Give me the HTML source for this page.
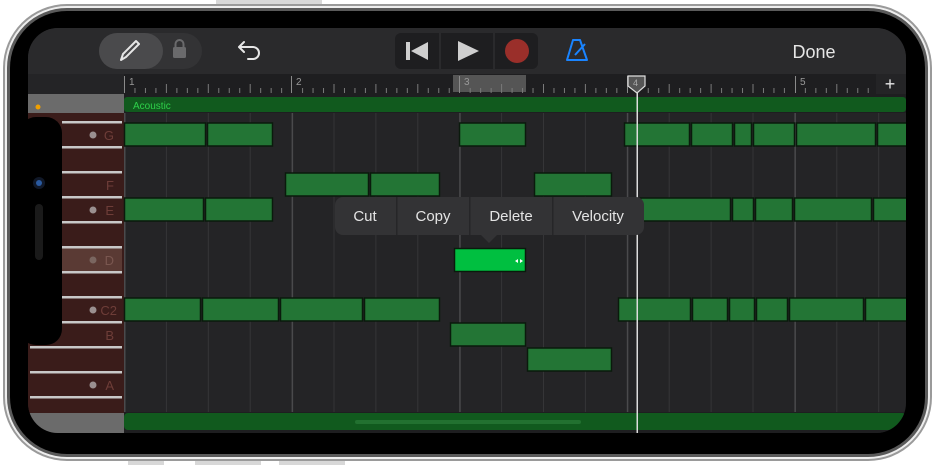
<!DOCTYPE html>
<html><head><meta charset="utf-8"><style>
html,body{margin:0;padding:0;background:#fff;width:936px;height:466px;overflow:hidden}
svg{display:block}
text{font-family:"Liberation Sans",sans-serif}
</style></head><body>
<svg width="936" height="466" viewBox="0 0 936 466" xmlns="http://www.w3.org/2000/svg">
<defs>
<clipPath id="scr"><rect x="28" y="28" width="878" height="405" rx="30"/></clipPath>
</defs>
<!-- frame -->
<rect x="216" y="0" width="106" height="4" fill="#d8d8d8"/>
<rect x="128" y="461" width="36" height="4" fill="#d8d8d8"/>
<rect x="195" y="461" width="66" height="4" fill="#d8d8d8"/>
<rect x="279" y="461" width="66" height="4" fill="#d8d8d8"/>
<rect x="3" y="4" width="929" height="457" rx="64" fill="#9a9a9a"/>
<rect x="5" y="6" width="925" height="453" rx="62" fill="#eeeeee"/>
<rect x="7" y="8" width="921" height="449" rx="60" fill="#5a5a5a"/>
<rect x="10" y="11" width="915" height="443" rx="57" fill="#000"/>
<g clip-path="url(#scr)">
<rect x="28" y="28" width="878" height="405" fill="#242426"/>
<!-- toolbar -->
<rect x="28" y="28" width="878" height="46" fill="#2a2a2c"/>
<rect x="99" y="33" width="103" height="36" rx="18" fill="#333335"/>
<rect x="99" y="33" width="64" height="36" rx="18" fill="#4a4a4c"/>
<path d="M121 60 L123 54 L136 41 L139 44 L126 57 Z" fill="none" stroke="#e6e6e6" stroke-width="2" stroke-linejoin="round"/>
<rect x="173" y="47" width="13" height="11" rx="1.5" fill="#6a6a6c"/>
<path d="M175.5 47 v-3 a4 4 0 0 1 8 0 v3" fill="none" stroke="#6a6a6c" stroke-width="2"/>
<path d="M240 47 h13 a6 6 0 0 1 0 12 h-5 M244 42 l-5 5 l5 5" fill="none" stroke="#e6e6e6" stroke-width="2" stroke-linecap="round" stroke-linejoin="round"/>
<rect x="395" y="33" width="143" height="36" rx="6" fill="#1e1e20"/>
<rect x="439" y="33" width="2" height="36" fill="#2a2a2c"/>
<rect x="493" y="33" width="2" height="36" fill="#2a2a2c"/>
<rect x="406" y="42" width="4" height="18" fill="#cfcfcf"/>
<path d="M428 42 L428 60 L411 51 Z" fill="#cfcfcf"/>
<path d="M458 41 L458 61 L479 51 Z" fill="#cfcfcf"/>
<circle cx="517" cy="51" r="12" fill="#9a2f2a"/>
<path d="M567 60 L573 40 H580 L587 60 Z M575 55 L585 44" fill="none" stroke="#1a84ff" stroke-width="2" stroke-linejoin="round"/>
<text x="814" y="58" fill="#e6e6e6" font-size="18" text-anchor="middle">Done</text>
<!-- ruler -->
<rect x="124" y="74" width="752" height="20" fill="#1e1e20"/>
<rect x="453" y="75" width="73" height="17" fill="#555"/>
<g stroke="#8a8a8a" stroke-width="1">
<path d="M124.5 76 v17 M291.5 76 v17 M459.5 76 v17 M627.5 76 v17 M795.5 76 v17"/>
</g>
<g id="ticks" stroke="#7a7a7a" stroke-width="1"></g>
<text x="129" y="85" fill="#999" font-size="10">1</text>
<text x="296" y="85" fill="#999" font-size="10">2</text>
<text x="464" y="85" fill="#999" font-size="10">3</text>
<text x="632" y="85" fill="#999" font-size="10">4</text>
<text x="800" y="85" fill="#999" font-size="10">5</text>
<text x="890" y="90" fill="#e6e6e6" font-size="18" text-anchor="middle">+</text>
<!-- left header -->
<rect x="28" y="94" width="96" height="19" fill="#6b6b6b"/>
<circle cx="38" cy="107" r="2.5" fill="#f0a000"/>
<rect x="124" y="94" width="782" height="19" fill="#1e1e20"/>
<rect x="124" y="97" width="782" height="15" rx="3" fill="#115a1e"/>
<text x="133" y="109" fill="#2ed04a" font-size="10">Acoustic</text>
<!-- fretboard -->
<rect x="28" y="113" width="96" height="300" fill="#3a1c1a"/>
<rect x="62" y="247" width="60" height="25" fill="#5a3a34"/>
<g fill="#c8c8c8" id="strings"></g>
<rect x="28" y="413" width="96" height="20" fill="#6b6b6b"/>
<g font-size="13" fill="#6e3d38" text-anchor="end">
<text x="114" y="140">G</text><text x="114" y="190">F</text><text x="114" y="215">E</text>
<text x="114" y="265" fill="#7a5750">D</text><text x="117" y="315">C2</text><text x="114" y="340">B</text><text x="114" y="390">A</text>
</g>
<g fill="#9a9090"><circle cx="93" cy="135" r="3.5"/><circle cx="93" cy="210" r="3.5"/><circle cx="93" cy="260" r="3.5" fill="#7a6660"/><circle cx="93" cy="310" r="3.5"/><circle cx="93" cy="385" r="3.5"/></g>
<rect x="20" y="117" width="42" height="228" rx="16" fill="#000"/>
<circle cx="39" cy="183" r="6" fill="#101828"/><circle cx="39" cy="183" r="3" fill="#2a5aa0"/>
<rect x="35" y="204" width="8" height="56" rx="4" fill="#1a1a1a"/>
<!-- grid -->
<g id="rows"></g>
<g id="vlines"></g>
<g id="notes" fill="#237535" stroke="#0a1a0c" stroke-width="1.5"></g>
<rect x="454.5" y="248.5" width="71" height="23" fill="#00bf40" stroke="#0a1a0c" stroke-width="1.5"/>
<path d="M518 259 l-3 2 l3 2 Z M520 259 l3 2 l-3 2 Z" fill="#fff"/>
<!-- bottom -->
<rect x="124" y="412" width="782" height="21" fill="#1e1e20"/>
<rect x="124" y="413" width="782" height="17" rx="4" fill="#115a1e"/>
<rect x="355" y="420" width="226" height="4" rx="2" fill="#2a7a38" opacity="0.7"/>
<!-- playhead -->
<rect x="636.5" y="84" width="1.5" height="349" fill="#ddd"/>
<path d="M628 76 H645 V86 L637 93 L628 86 Z" fill="#555" stroke="#ddd" stroke-width="1.2"/>
<text x="633" y="86" fill="#aaa" font-size="9">4</text>
<!-- popup -->
<rect x="335" y="197" width="309" height="38" rx="8" fill="#333335"/>
<path d="M481 235 L489 243 L497 235 Z" fill="#333335"/>
<g fill="#262628"><rect x="396" y="197" width="1.5" height="38"/><rect x="469" y="197" width="1.5" height="38"/><rect x="552" y="197" width="1.5" height="38"/></g>
<g fill="#e4e4e4" font-size="15" text-anchor="middle">
<text x="365" y="221">Cut</text><text x="433" y="221">Copy</text><text x="511" y="221">Delete</text><text x="598" y="221">Velocity</text>
</g>
</g>
<script>
var ns="http://www.w3.org/2000/svg";
function el(p,t,a){var e=document.createElementNS(ns,t);for(var k in a)e.setAttribute(k,a[k]);document.getElementById(p).appendChild(e);return e;}
// rows
var shade=[1,0,1,0,1,1,0,1,0,1,0,1];
for(var i=-1;i<12;i++){var y=122+25*i;var top=Math.max(113,y);var h=Math.min(412,y+25)-top;
 el("rows","rect",{x:124,y:top,width:782,height:h,fill:(i%2===0?"#2b2b2d":"#252527")});}
for(var k=0;k<19;k++){var x=124+k*41.9;var bar=k%4===0;
 el("vlines","rect",{x:x,y:113,width:bar?1.5:1,height:300,fill:bar?"#4a4a4c":"#353537"});}
for(var k=0;k<18*4;k++){var x=124+k*10.475;if(x>875)break;var m=k%4===0?0:(k%2===0?2:4);
 if(k%16===0)continue;el("ticks","line",{x1:x+0.5,x2:x+0.5,y1:88-(k%4===0?4:0)-(k%8===0?0:0),y2:93});}
for(var i=0;i<12;i++){var y=122+25*i;el("strings","rect",{x:(y>=345?30:62),y:y-1,width:(y>=345?92:60),height:2.5});}
var N=[[0,[[124,206],[207,273],[459,526],[624,690],[691,733],[734,752],[753,795],[796,876],[877,910]]],
[2,[[285,369],[370,440],[534,612]]],
[3,[[124,204],[205,273],[640,731],[732,754],[755,793],[794,872],[873,910]]],
[7,[[124,201],[202,279],[280,363],[364,440],[618,691],[692,728],[729,755],[756,788],[789,864],[865,910]]],
[8,[[450,526]]],[9,[[527,612]]]];
N.forEach(function(r){var y=122.5+25*r[0];r[1].forEach(function(s){el("notes","rect",{x:s[0]+0.5,y:y+0.5,width:s[1]-s[0]-1,height:23});});});
</script>
</svg>
</body></html>
